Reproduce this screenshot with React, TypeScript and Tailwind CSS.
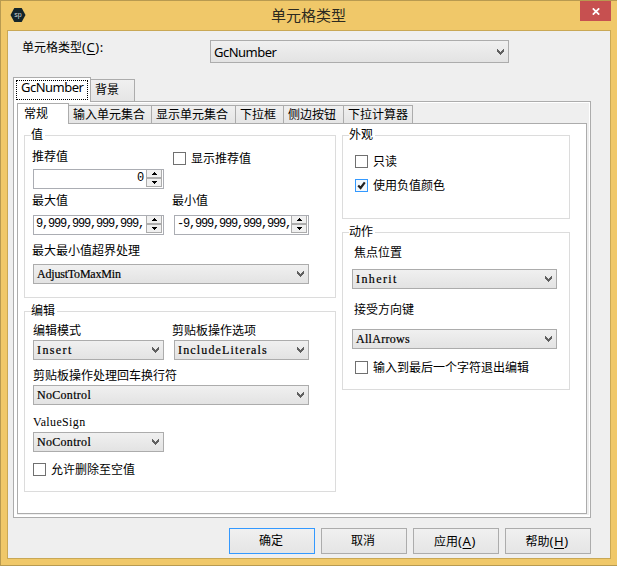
import { useState } from 'react';
import type { ReactNode } from 'react';

const innerTabs = [
  { label: '常规', width: 'w-[52px]' },
  { label: '输入单元集合', width: 'w-[83px]' },
  { label: '显示单元集合', width: 'w-[84px]' },
  { label: '下拉框', width: 'w-[48px]' },
  { label: '侧边按钮', width: 'w-[60px]' },
  { label: '下拉计算器', width: 'w-[69px]' },
];

function Chevron() {
  return (
    <svg width="7" height="6" viewBox="0 0 7 6" shapeRendering="crispEdges" className="shrink-0">
      <path
        d="M0 0h1v1h1v1h1v1h1v-1h1v-1h1v-1h1v3h-1v1h-1v1h-1v1h-1v-1h-1v-1h-1v-1h-1z"
        fill="#606060"
      />
    </svg>
  );
}

function Select({ value, className = '', tracking = '' }: { value: string; className?: string; tracking?: string }) {
  return (
    <button
      className={`flex h-5 items-center justify-between border border-[#acacac] bg-linear-to-b from-[#f0f0f0] to-[#e3e3e3] pr-1 pl-[3px] ${className}`}
    >
      <span className={`font-['Liberation_Serif',serif] text-[12px] leading-[18px] [-webkit-text-stroke:0.2px_black] ${tracking}`}>
        {value}
      </span>
      <Chevron />
    </button>
  );
}

function NumberBox({ value, className = '' }: { value: string; className?: string }) {
  return (
    <div className={`flex h-5 border border-[#abadb3] bg-white pr-px ${className}`}>
      <div className="flex-1 overflow-hidden pr-[3px] pl-[2px] text-right font-['Liberation_Mono',monospace] text-[12px] leading-[17px] tracking-[-1.2px] whitespace-nowrap">
        {value}
      </div>
      <div className="flex h-[17px] w-4 shrink-0 flex-col border-x border-b border-[#acacac] bg-[#f0f0f0]">
        <div className="flex h-2 items-center justify-center border-b border-[#acacac]">
          <svg width="5" height="3" shapeRendering="crispEdges">
            <path d="M2 0h1v1h1v1h1v1h-5v-1h1v-1h1z" />
          </svg>
        </div>
        <div className="flex flex-1 items-center justify-center border-t border-[#acacac]">
          <svg width="5" height="3" shapeRendering="crispEdges">
            <path d="M0 0h5v1h-1v1h-1v1h-1v-1h-1v-1h-1z" />
          </svg>
        </div>
      </div>
    </div>
  );
}

function Checkbox({ label, initial = false, className = '' }: { label: string; initial?: boolean; className?: string }) {
  const [checked, setChecked] = useState(initial);

  return (
    <button onClick={() => setChecked(!checked)} className={`flex h-[17px] items-center gap-[5px] ${className}`}>
      <span
        className={`flex h-[13px] w-[13px] shrink-0 items-center justify-center border ${
          checked ? 'border-[#3399ff] bg-[#f3f9ff]' : 'border-[#707070] bg-white'
        }`}
      >
        {checked && (
          <svg width="11" height="11" viewBox="0 0 11 11" className="shrink-0">
            <path d="M2.2 5.4 4.6 8 8.8 2.4" fill="none" stroke="#212121" strokeWidth="2.2" />
          </svg>
        )}
      </span>
      <span className="leading-4 whitespace-nowrap">{label}</span>
    </button>
  );
}

function Label({ children, className = '' }: { children: ReactNode; className?: string }) {
  return <div className={`h-4 leading-4 whitespace-nowrap ${className}`}>{children}</div>;
}

function Group({ title, className = '', children }: { title: string; className?: string; children: ReactNode }) {
  return (
    <section className={`border border-[#dcdcdc] ${className}`}>
      <h3 className="-mt-[10px] ml-[6px] h-4 w-fit bg-white pr-[2px] leading-[18px]">{title}</h3>
      {children}
    </section>
  );
}

// Accelerator key shown after a caption, e.g. (A)
function Hotkey({ letter, suffix = '' }: { letter: string; suffix?: string }) {
  return (
    <span className="text-[13px] tracking-[0.6px]">
      (<u className="underline-offset-2">{letter}</u>){suffix}
    </span>
  );
}

function DialogButton({ primary = false, children }: { primary?: boolean; children: ReactNode }) {
  return (
    <button
      className={`h-[26px] w-[86px] border bg-linear-to-b from-[#f0f0f0] to-[#e5e5e5] pr-[2px] leading-[22px] ${
        primary ? 'border-[#3399ff]' : 'border-[#acacac]'
      }`}
    >
      {children}
    </button>
  );
}

export default function App() {
  return (
    <div className="flex h-[566px] w-[617px] flex-col border-t border-b border-l border-[#b89a50] bg-[#f0c869] font-['Noto_Sans','Noto_Sans_CJK_SC',sans-serif] text-[12px] text-black">
      {/* Title bar */}
      <header className="flex h-[29px] shrink-0 items-start pr-[6px] pl-[9px]">
        <svg width="16" height="16" viewBox="0 0 16 16" className="mt-[6px]">
          <path d="M4.3 1h7.4L15.5 8l-3.8 7H4.3L.5 8z" fill="#14252a" />
          <text x="8" y="10" textAnchor="middle" fontSize="7" fill="#d0d6d6" fontFamily="Liberation Sans">
            sp
          </text>
        </svg>
        <h1 className="flex-1 pl-[11px] text-center text-[15px] leading-[28px] text-[#2c2a20]">单元格类型</h1>
        <button className="flex h-5 w-[31px] items-center justify-center bg-[#c75050]">
          <svg width="8" height="7" viewBox="0 0 8 7">
            <path d="M.8.3 7.2 6.7M7.2.3.8 6.7" stroke="white" strokeWidth="1.7" />
          </svg>
        </button>
      </header>

      <main className="mr-[6px] ml-[6px] h-[529px] shrink-0 border border-[#c9a855] bg-[#efefef] pr-[19px] pl-[5px]">
        <div className="flex h-[46px] items-start pl-[9px]">
          <label className="w-[188px] pt-[7px] text-[12px] leading-[18px]">
            单元格类型
            <Hotkey letter="C" suffix=":" />
          </label>
          <button className="mt-[9px] flex h-[23px] w-[299px] items-center justify-between border border-[#acacac] bg-linear-to-b from-[#f0f0f0] to-[#e3e3e3] pr-1 pl-[3px]">
            <span className="text-[13px] leading-5 tracking-[-0.5px]">GcNumber</span>
            <Chevron />
          </button>
        </div>

        {/* Outer tabs */}
        <div className="flex h-6 items-end">
          <div className="relative -mb-px h-[25px] w-[78px] border border-b-0 border-[#acacac] bg-white p-[2px]">
            <div className="h-5 w-[72px] border border-dotted border-black pl-1 text-[13px] leading-[13px] tracking-[-0.5px]">
              GcNumber
            </div>
          </div>
          <div className="h-[22px] w-11 border border-b-0 border-l-0 border-[#acacac] bg-linear-to-b from-[#f0f0f0] to-[#e5e5e5] pl-1 leading-[20px]">
            背景
          </div>
        </div>

        <div className="h-[417px] w-[578px] border border-[#acacac] bg-white pt-px pr-px pb-[2px] pl-[3px]">
          <div className="h-full bg-[#efefef] pr-[2px]">
            {/* Inner tabs */}
            <div className="flex h-5 items-end">
              {innerTabs.map((tab, i) => (
                <div
                  key={tab.label}
                  className={`${tab.width} border border-b-0 border-[#acacac] whitespace-nowrap ${
                    i === 0
                      ? 'relative -mb-px h-[21px] bg-white pl-[6px] leading-[19px]'
                      : 'h-[18px] border-l-0 bg-linear-to-b from-[#f0f0f0] to-[#e5e5e5] pl-1 leading-[18px]'
                  }`}
                >
                  {tab.label}
                </div>
              ))}
            </div>

            <div className="flex h-[391px] gap-[6px] border border-[#acacac] bg-white px-[6px] pt-[11px]">
              <div className="flex w-[312px] flex-col gap-[13px]">
                <Group title="值" className="h-[163px]">
                  <div className="flex pt-[7px] pl-[7px]">
                    <Label className="w-[141px]">推荐值</Label>
                    <Checkbox label="显示推荐值" className="mt-px -mb-[2px]" />
                  </div>
                  <NumberBox value="0" className="mt-1 ml-2 w-[131px]" />
                  <div className="mt-1 flex pl-[7px]">
                    <Label className="w-[140px]">最大值</Label>
                    <Label>最小值</Label>
                  </div>
                  <div className="mt-[6px] flex gap-[10px] pl-2">
                    <NumberBox value="9,999,999,999,999," className="w-[131px]" />
                    <NumberBox value="-9,999,999,999,999," className="w-[135px]" />
                  </div>
                  <Label className="mt-2 pl-[7px]">最大最小值超界处理</Label>
                  <Select value="AdjustToMaxMin" tracking="tracking-[-0.2px]" className="mt-[5px] ml-2 w-[276px]" />
                </Group>

                <Group title="编辑" className="h-[181px]">
                  <div className="mt-[5px] flex pl-2">
                    <Label className="w-[139px]">编辑模式</Label>
                    <Label>剪贴板操作选项</Label>
                  </div>
                  <div className="mt-px flex gap-[10px] pl-2">
                    <Select value="Insert" tracking="tracking-[1.4px]" className="w-[131px]" />
                    <Select value="IncludeLiterals" tracking="tracking-[1.15px]" className="w-[135px]" />
                  </div>
                  <Label className="mt-2 pl-2">剪贴板操作处理回车换行符</Label>
                  <Select value="NoControl" tracking="tracking-[0.3px]" className="mt-px ml-2 w-[276px]" />
                  <Label className="mt-[9px] pl-2 font-['Liberation_Serif',serif] tracking-[0.35px]">ValueSign</Label>
                  <Select value="NoControl" tracking="tracking-[0.3px]" className="mt-[2px] ml-2 w-[131px]" />
                  <Checkbox label="允许删除至空值" className="mt-[9px] ml-2" />
                </Group>
              </div>

              <div className="flex w-[228px] flex-col gap-[13px]">
                <Group title="外观" className="h-[84px]">
                  <Checkbox label="只读" className="mt-[11px] ml-3" />
                  <Checkbox label="使用负值颜色" initial className="mt-[7px] ml-3" />
                </Group>

                <Group title="动作" className="h-[158px]">
                  <Label className="mt-[6px] pl-[11px]">焦点位置</Label>
                  <Select value="Inherit" tracking="tracking-[1.4px]" className="mt-2 ml-[9px] w-[205px]" />
                  <Label className="mt-[13px] pl-[11px]">接受方向键</Label>
                  <Select value="AllArrows" tracking="tracking-[0.3px]" className="mt-[11px] ml-[9px] w-[205px]" />
                  <Checkbox label="输入到最后一个字符退出编辑" className="mt-[10px] ml-3" />
                </Group>
              </div>
            </div>
          </div>
        </div>

        <footer className="mt-[10px] flex justify-end gap-[6px]">
          <DialogButton primary>确定</DialogButton>
          <DialogButton>取消</DialogButton>
          <DialogButton>
            应用
            <Hotkey letter="A" />
          </DialogButton>
          <DialogButton>
            帮助
            <Hotkey letter="H" />
          </DialogButton>
        </footer>
      </main>
    </div>
  );
}
